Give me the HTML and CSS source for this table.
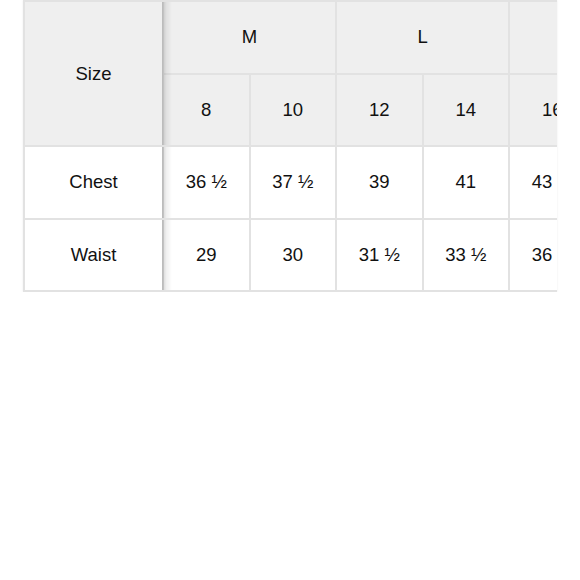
FILE: index.html
```html
<!DOCTYPE html>
<html>
<head>
<meta charset="utf-8">
<link rel="stylesheet" href="styles.css">
</head>
<body>
<div class="wrap">
  <table class="sizes">
    <colgroup>
      <col class="c-first">
      <col class="c-data"><col class="c-data"><col class="c-data"><col class="c-data">
      <col class="c-data"><col class="c-data">
    </colgroup>
    <thead>
      <tr>
        <th class="sticky" rowspan="2">Size</th>
        <th colspan="2">M</th>
        <th colspan="2">L</th>
        <th colspan="2">XL</th>
      </tr>
      <tr>
        <th>8</th><th>10</th><th>12</th><th>14</th><th>16</th><th>18</th>
      </tr>
    </thead>
    <tbody>
      <tr>
        <td class="sticky">Chest</td>
        <td>36 ½</td><td>37 ½</td><td>39</td><td>41</td><td>43 ½</td><td>45</td>
      </tr>
      <tr>
        <td class="sticky">Waist</td>
        <td>29</td><td>30</td><td>31 ½</td><td>33 ½</td><td>36 ½</td><td>38</td>
      </tr>
    </tbody>
  </table>
</div>
</body>
</html>
```
FILE: styles.css
```css
html, body { margin: 0; padding: 0; background: #fff; }
body { font-family: "Liberation Sans", Arial, Helvetica, sans-serif; color: #111; }
.wrap {
  margin-left: 23px;
  width: 534px;
  overflow: hidden;
  box-shadow: 0 0 2px rgba(0,0,0,0.08);
}
.sizes {
  border-collapse: collapse;
  table-layout: fixed;
  width: 658px;
  font-size: 18.5px;
}
.c-first { width: 139px; }
.c-data { width: 86.5px; }
.sizes th, .sizes td {
  border: 2px solid #e2e2e2;
  text-align: center;
  vertical-align: middle;
  height: 72.5px;
  padding: 0;
  font-weight: normal;
  box-sizing: border-box;
}
.sizes th { background: #efefef; }
.sizes td { background: #fff; }
.sticky { position: sticky; left: 0; z-index: 1; }
.sticky::after {
  content: "";
  position: absolute;
  top: 0; bottom: 0;
  right: -10px;
  width: 10px;
  background: linear-gradient(to right, rgba(0,0,0,0.18), rgba(0,0,0,0.06) 45%, rgba(0,0,0,0));
}
```
